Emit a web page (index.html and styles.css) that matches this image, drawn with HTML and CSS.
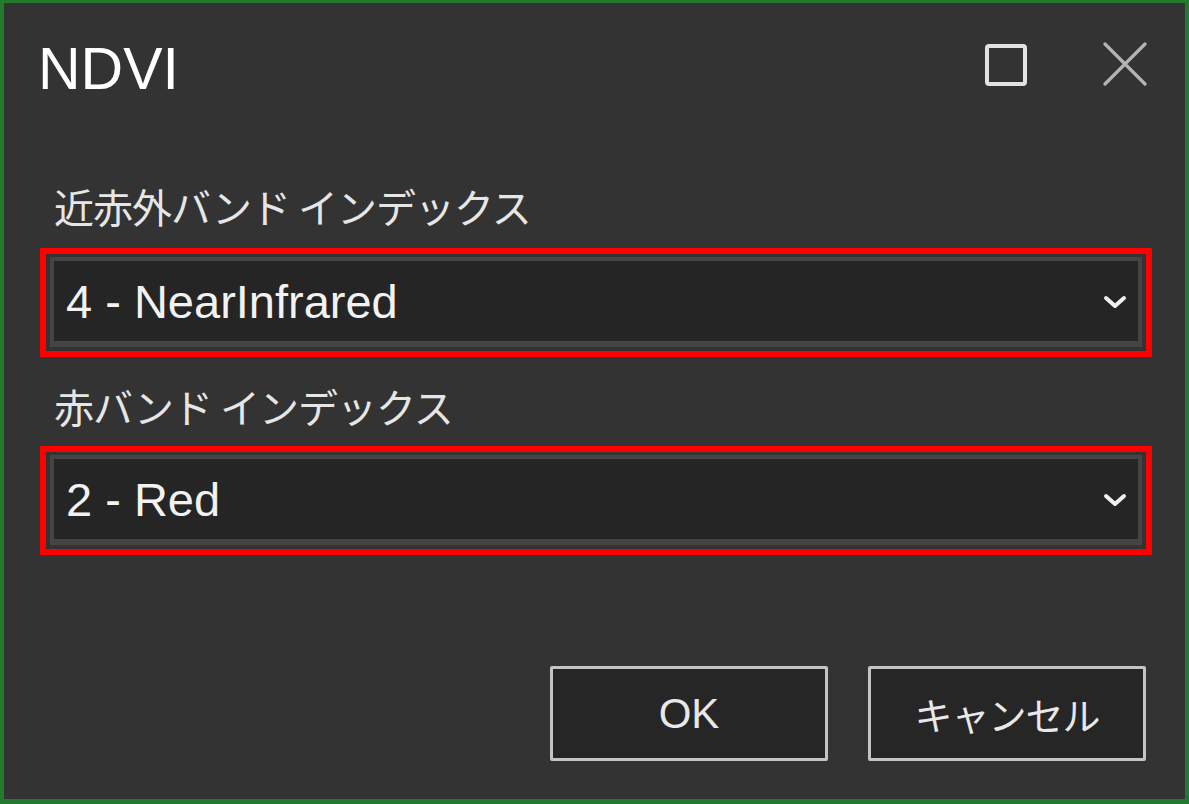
FILE: index.html
```html
<!DOCTYPE html>
<html lang="ja">
<head>
    <meta charset="UTF-8">
    <meta name="viewport" content="width=device-width, initial-scale=1.0">
    <title>NDVI</title>
    <link rel="stylesheet" href="styles.css">
</head>
<body>
    <div class="window">
        <div class="titlebar">
            <h1 class="title">NDVI</h1>
            <div class="controls">
                <svg class="btn-max" width="42" height="42" viewBox="0 0 42 42">
                    <rect x="2" y="2" width="38" height="38" rx="2" fill="none" stroke="#e2e2e2" stroke-width="4"/>
                </svg>
                <svg class="btn-close" width="44" height="44" viewBox="0 0 44 44">
                    <path d="M2 2 L42 42 M42 2 L2 42" stroke="#b4b4b4" stroke-width="3.2" stroke-linecap="round"/>
                </svg>
            </div>
        </div>

        <div class="content">
            <div class="label first">近赤外バンド インデックス</div>
            <div class="highlight">
                <div class="combo">
                    <span class="combo-text">4 - NearInfrared</span>
                    <svg class="chevron" width="24" height="14" viewBox="0 0 24 14">
                        <path d="M3 3 L12 11 L21 3" fill="none" stroke="#f0f0f0" stroke-width="4" stroke-linecap="round" stroke-linejoin="round"/>
                    </svg>
                </div>
            </div>

            <div class="label second">赤バンド インデックス</div>
            <div class="highlight">
                <div class="combo">
                    <span class="combo-text">2 - Red</span>
                    <svg class="chevron" width="24" height="14" viewBox="0 0 24 14">
                        <path d="M3 3 L12 11 L21 3" fill="none" stroke="#f0f0f0" stroke-width="4" stroke-linecap="round" stroke-linejoin="round"/>
                    </svg>
                </div>
            </div>

            <div class="buttons">
                <button class="btn btn-ok">OK</button>
                <button class="btn btn-cancel">キャンセル</button>
            </div>
        </div>
    </div>
</body>
</html>
```

FILE: styles.css
```css
html, body {
    margin: 0;
    padding: 0;
}
body {
    background-color: #217a2d;
    font-family: "Liberation Sans", "Noto Sans CJK JP", sans-serif;
}
.window {
    box-sizing: border-box;
    width: 1189px;
    height: 804px;
    border-style: solid;
    border-color: #217a2d;
    border-width: 3px 4px 5px 4px;
    background-color: #333333;
}
.titlebar {
    display: flex;
    align-items: flex-start;
    justify-content: space-between;
    padding: 37px 38px 0 34px;
}
.title {
    margin: 0;
    font-size: 59px;
    line-height: 58px;
    font-weight: normal;
    color: #ffffff;
}
.controls {
    display: flex;
    align-items: center;
    gap: 76px;
    margin-top: 2px;
}
.btn-max {
    margin-top: 1px;
}
.content {
    padding: 0 33px 0 36px;
}
.label {
    font-family: "Noto Sans CJK JP", sans-serif;
    font-size: 40px;
    line-height: 48px;
    letter-spacing: -1px;
    color: #e6e6e6;
    padding-left: 14px;
}
.label.first {
    margin-top: 84px;
}
.label.second {
    margin-top: 25px;
}
.highlight {
    box-sizing: border-box;
    height: 109px;
    margin-top: 18px;
    border: 6px solid #ff0000;
    padding: 3px 4px 4px 4px;
}
.label.second + .highlight {
    margin-top: 16px;
}
.combo {
    box-sizing: border-box;
    height: 90px;
    display: flex;
    align-items: center;
    justify-content: space-between;
    background-color: #252525;
    border: 4px solid #454545;
    border-bottom-width: 6px;
    padding: 0 11px 0 12px;
}
.combo-text {
    font-size: 47px;
    color: #f2f2f2;
}
.chevron {
    margin-top: 2px;
}
.buttons {
    display: flex;
    justify-content: flex-end;
    gap: 40px;
    margin-top: 111px;
    padding-right: 6px;
}
.btn {
    box-sizing: border-box;
    width: 278px;
    height: 95px;
    background-color: #262626;
    border: 3px solid #c4c4c4;
    border-radius: 2px;
    color: #e8e8e8;
    padding: 0;
    font-family: "Liberation Sans", "Noto Sans CJK JP", sans-serif;
}
.btn-ok {
    font-size: 42px;
}
.btn-cancel {
    font-family: "Noto Sans CJK JP", sans-serif;
    font-size: 38px;
    letter-spacing: -1px;
}
```
